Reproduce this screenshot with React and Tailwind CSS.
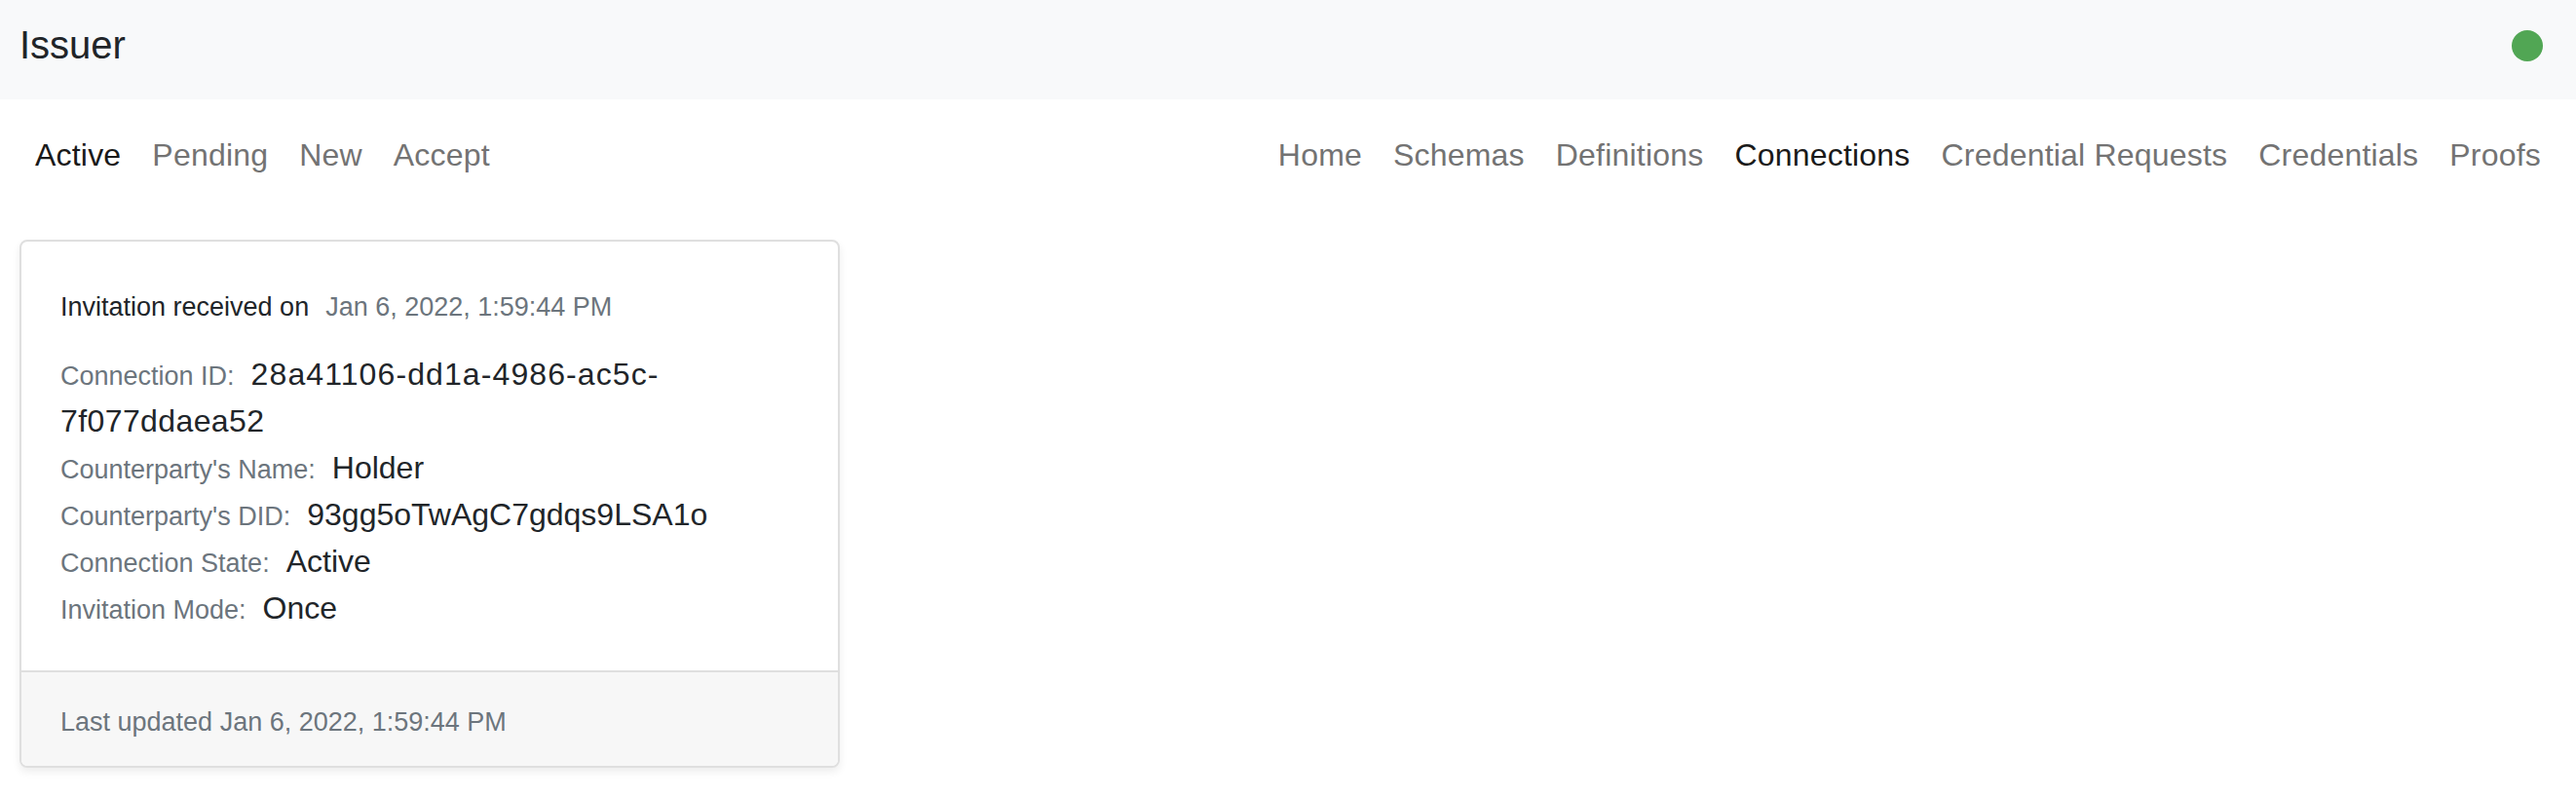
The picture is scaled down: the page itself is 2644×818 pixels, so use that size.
export default function App() {
  const left = ["Active", "Pending", "New", "Accept"];
  const right = ["Home", "Schemas", "Definitions", "Connections", "Credential Requests", "Credentials", "Proofs"];
  const rows = [
    ["Counterparty's Name:", "Holder"],
    ["Counterparty's DID:", "93gg5oTwAgC7gdqs9LSA1o"],
    ["Connection State:", "Active"],
    ["Invitation Mode:", "Once"],
  ];
  return (
    <div className="min-h-screen bg-white text-[#212529]" style={{ fontFamily: '"Liberation Sans", Arial, sans-serif' }}>
      <header className="flex h-[102px] items-center justify-between bg-[#f8f9fa] px-[20px] pb-[11px]">
        <div className="text-[40px] leading-[60px]">Issuer</div>
        <div className="mr-[14px] mt-[2px] h-[32px] w-[32px] rounded-full bg-[#51a654]"></div>
      </header>
      <nav className="mt-[17px] flex justify-between px-[20px] text-[32px] leading-[48px] tracking-[0.2px]">
        <div className="flex">
          {left.map((t) => (
            <span key={t} className={"px-[16px] py-[16px] " + (t === "Active" ? "text-[#1a1a1a]" : "text-[#737373]")}>
              {t}
            </span>
          ))}
        </div>
        <div className="flex">
          {right.map((t) => (
            <span key={t} className={"px-[16px] py-[16px] " + (t === "Connections" ? "text-[#1a1a1a]" : "text-[#737373]")}>
              {t}
            </span>
          ))}
        </div>
      </nav>
      <div className="ml-[20px] mt-[47px] w-[842px] overflow-hidden rounded-[8px] border-2 border-[#dfdfdf] bg-white shadow-[0_4px_8px_rgba(0,0,0,0.075)]">
        <div className="px-[40px] pb-[40px] pt-[40px]">
          <div className="text-[27px] leading-[54px]">
            <span className="mr-[17px]">Invitation received on</span>
            <span className="text-[#6c757d]">Jan 6, 2022, 1:59:44 PM</span>
          </div>
          <div className="mt-[18px]">
            <div className="text-[32px] leading-[48px]">
              <span className="mr-[17px] text-[27px] leading-none text-[#6c757d]">Connection ID:</span>
              <span className="tracking-[1.1px]">28a41106-dd1a-4986-ac5c-</span>
              <br />
              <span className="tracking-[0.4px]">7f077ddaea52</span>
            </div>
            {rows.map(([l, v]) => (
              <div key={l} className="text-[32px] leading-[48px]">
                <span className="mr-[17px] text-[27px] leading-none text-[#6c757d]">{l}</span>
                <span>{v}</span>
              </div>
            ))}
          </div>
        </div>
        <div className="border-t-2 border-[#dfdfdf] bg-[#f7f7f7] px-[40px] pb-[25px] pt-[31px] text-[27px] leading-[40px] text-[#6c757d]">
          Last updated Jan 6, 2022, 1:59:44 PM
        </div>
      </div>
    </div>
  );
}
